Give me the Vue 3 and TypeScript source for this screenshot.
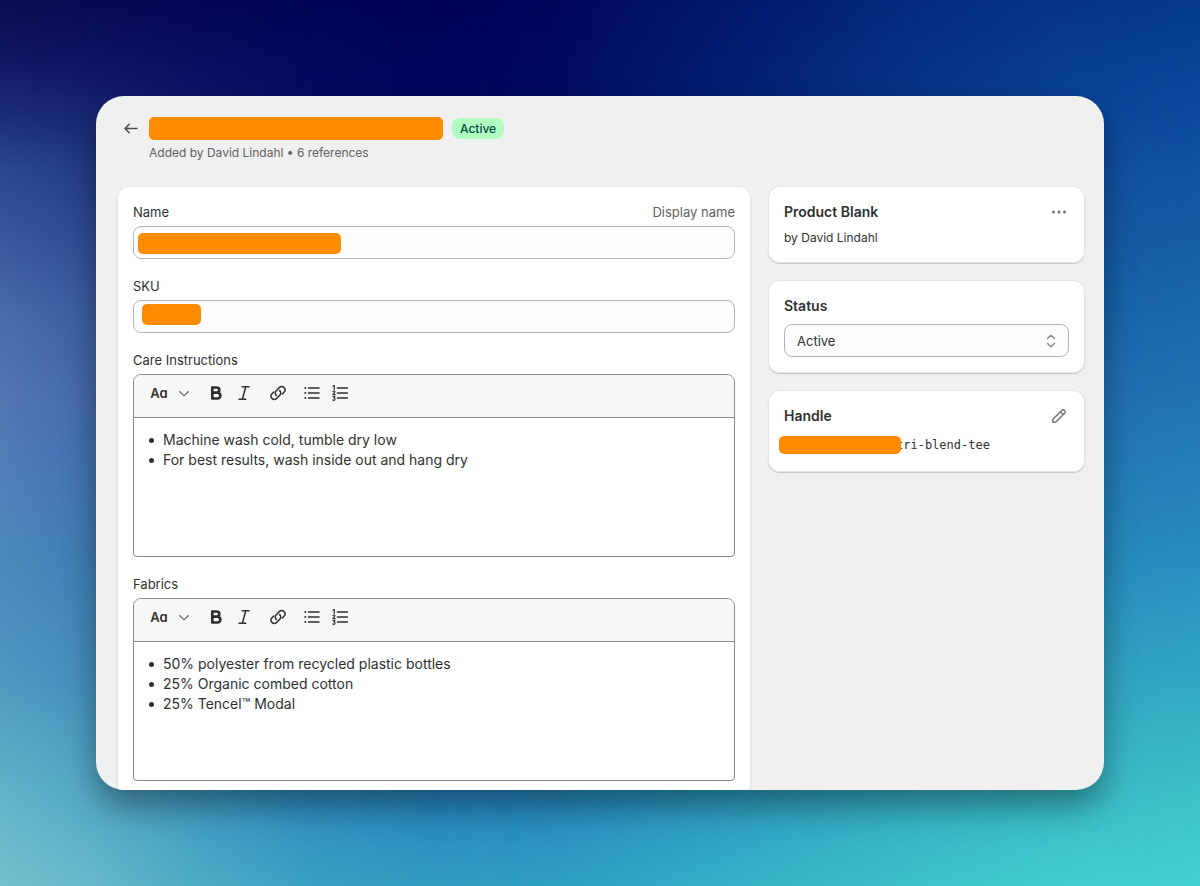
<script setup lang="ts">
import { ref } from 'vue'

interface Editor {
  id: string
  label: string
  lines: string[]
}

const name = ref('')
const sku = ref('')
const status = ref('Active')

const editors: Editor[] = [
  {
    id: 'care',
    label: 'Care Instructions',
    lines: ['Machine wash cold, tumble dry low', 'For best results, wash inside out and hang dry'],
  },
  {
    id: 'fabrics',
    label: 'Fabrics',
    lines: ['50% polyester from recycled plastic bottles', '25% Organic combed cotton', '25% Tencel™ Modal'],
  },
]
</script>

<template>
  <div class="page">
    <main class="window">
      <header class="header">
        <button class="icon-btn back" type="button" aria-label="Back">
          <svg width="16" height="16" viewBox="0 0 16 16">
            <path d="M14 7.500H2.200M6.200 3.300 2 7.500l4.200 4.200" />
          </svg>
        </button>
        <div class="heading">
          <div class="title-row">
            <span class="mask mask-title"></span>
            <span class="badge">Active</span>
          </div>
          <p class="meta">Added by David Lindahl • 6 references</p>
        </div>
      </header>

      <div class="columns">
        <section class="card main-card">
          <div class="field">
            <div class="label-row">
              <label for="name">Name</label>
              <span class="hint">Display name</span>
            </div>
            <div class="control">
              <input id="name" v-model="name" type="text" />
              <span class="mask mask-name"></span>
            </div>
          </div>

          <div class="field">
            <div class="label-row"><label for="sku">SKU</label></div>
            <div class="control">
              <input id="sku" v-model="sku" type="text" />
              <span class="mask mask-sku"></span>
            </div>
          </div>

          <div v-for="e in editors" :key="e.id" class="field">
            <div class="label-row"><span :id="e.id">{{ e.label }}</span></div>
            <div class="editor">
              <div class="toolbar">
                <button class="tool format" type="button" aria-label="Formatting">
                  <span class="aa">Aa</span>
                  <svg width="12" height="12" viewBox="0 0 12 12" class="thin">
                    <path d="M1.500 4.500 6 8.800 10.500 4.500" />
                  </svg>
                </button>
                <button class="tool bold" type="button" aria-label="Bold">
                  <svg width="16" height="16" viewBox="0 0 16 16">
                    <path d="M4.300 2.500H8.700A2.600 2.600 0 0 1 8.700 7.700H4.300ZM4.300 7.700H9.500A2.900 2.900 0 0 1 9.500 13.500H4.300Z" />
                  </svg>
                </button>
                <button class="tool italic" type="button" aria-label="Italic">
                  <svg width="16" height="16" viewBox="0 0 16 16">
                    <path d="M6.300 1.800H13M3 14.200H9.700M9.800 1.800 6.300 14.200" />
                  </svg>
                </button>
                <button class="tool link" type="button" aria-label="Link">
                  <svg width="16" height="16" viewBox="0 0 16 16">
                    <path d="M6.300 10.400A3.300 3.300 0 0 1 6.200 5.700L9.300 2.600A3.300 3.300 0 0 1 14 7.300L12.300 9" />
                    <path d="M9.700 5.600A3.300 3.300 0 0 1 9.800 10.300L6.700 13.400A3.300 3.300 0 0 1 2 8.700L3.700 7" />
                  </svg>
                </button>
                <button class="tool bullets" type="button" aria-label="Bulleted list">
                  <svg width="16" height="16" viewBox="0 0 16 16">
                    <path d="M4.500 3H15M4.500 8H15M4.500 13H15" />
                    <path class="dots" d="M1.300 3h.01M1.300 8h.01M1.300 13h.01" />
                  </svg>
                </button>
                <button class="tool numbers" type="button" aria-label="Numbered list">
                  <svg width="16" height="16" viewBox="0 0 16 16">
                    <path d="M5.500 3H15.500M5.500 8H15.500M5.500 13H15.500" />
                    <path class="digits" d="M1 1.200 2.300.5V4.500M.9 6.600C1.400 5.600 3.200 5.900 2.800 7.200L.9 9.700H3.200M1 11.500H3L1.900 12.900C3.500 13 3.300 15.400 1.800 15.400Q1.200 15.400.8 14.900" />
                  </svg>
                </button>
              </div>
              <div class="content" contenteditable="true" role="textbox" aria-multiline="true" :aria-labelledby="e.id">
                <ul>
                  <li v-for="line in e.lines" :key="line">{{ line }}</li>
                </ul>
              </div>
            </div>
          </div>
        </section>

        <aside class="side">
          <section class="card">
            <div class="card-head">
              <h2>Product Blank</h2>
              <button class="icon-btn" type="button" aria-label="More actions">
                <svg width="18" height="18" viewBox="0 0 18 18">
                  <g class="solid">
                    <circle cx="3.500" cy="9" r="1.500" />
                    <circle cx="9" cy="9" r="1.500" />
                    <circle cx="14.500" cy="9" r="1.500" />
                  </g>
                </svg>
              </button>
            </div>
            <p class="by">by David Lindahl</p>
          </section>

          <section class="card">
            <h2><label for="status">Status</label></h2>
            <div class="control select">
              <select id="status" v-model="status">
                <option>Active</option>
                <option>Draft</option>
              </select>
              <svg width="12" height="16" viewBox="0 0 12 16">
                <path d="M2.500 5.500 6 2.200 9.500 5.500M2.500 10.500 6 13.800 9.500 10.500" />
              </svg>
            </div>
          </section>

          <section class="card">
            <div class="card-head">
              <h2>Handle</h2>
              <button class="icon-btn" type="button" aria-label="Edit handle">
                <svg width="18" height="18" viewBox="0 0 18 18">
                  <path d="M2.800 15.200V13.600Q2.800 12.400 3.600 11.600L11.800 3.400A1.980 1.980 0 0 1 14.600 6.200L6.400 14.400Q5.600 15.200 4.400 15.200ZM10.400 4.800 13.200 7.600" />
                </svg>
              </button>
            </div>
            <p class="handle"><span class="mask mask-handle"></span><code>tri-blend-tee</code></p>
          </section>
        </aside>
      </div>
    </main>
  </div>
</template>

<style>
body {
  margin: 0;
}
</style>

<style scoped>
* {
  box-sizing: border-box;
}

.page {
  position: relative;
  isolation: isolate;
  height: 100vh;
  padding: 96px;
  font: 13px/20px Inter, "Liberation Sans", sans-serif;
  color: #303030;
  background: linear-gradient(#053a8e 0%, #0b4a9c 13%, #1255a4 20%, #155ca4 26%, #1a68ac 35%, #2274b4 45%, #2580b8 54%, #2890c0 64%, #2f9fc2 72%, #36b0c4 81%, #3cc0c8 89%, #42d2d0 100%);
}

.page::before,
.page::after {
  content: "";
  position: absolute;
  inset: 0;
  z-index: -1;
}

.page::before {
  background: linear-gradient(#000458 0%, #00085e 11%, #0c3a90 45%, #1c64ac 75%, #2484bc 90%, #2e9cc0 100%);
  mask-image: linear-gradient(90deg, #000 36%, rgba(0, 0, 0, 0.94) 46%, rgba(0, 0, 0, 0.6) 62%, rgba(0, 0, 0, 0.28) 77%, rgba(0, 0, 0, 0.08) 90%, transparent 100%);
}

.page::after {
  background: linear-gradient(#080c50 0%, #10165f 6%, #1c2d78 13%, #2b478d 19%, #38569a 26%, #486ba8 35%, #5377b3 45%, #5080b8 54%, #4a8aba 64%, #4f9ac0 77%, #60b2c8 89%, #74c0cc 100%);
  mask-image: linear-gradient(90deg, #000 0%, rgba(0, 0, 0, 0.78) 8%, rgba(0, 0, 0, 0.42) 17%, rgba(0, 0, 0, 0.16) 26%, rgba(0, 0, 0, 0.04) 35%, transparent 44%);
}

.window {
  height: 100%;
  padding: 21px 19px 0 21px;
  overflow: hidden;
  border-radius: 28px;
  background: #f0f0f0;
  box-shadow: 0 16px 32px rgba(0, 0, 0, 0.38);
}

button {
  display: inline-flex;
  align-items: center;
  justify-content: center;
  padding: 0;
  border: 0;
  background: none;
  color: inherit;
  font: inherit;
  cursor: pointer;
}

svg {
  display: block;
  flex: none;
  fill: none;
  stroke: currentColor;
  stroke-width: 1.5;
  stroke-linecap: round;
  stroke-linejoin: round;
}

h2,
p {
  margin: 0;
}

.mask {
  display: block;
  border-radius: 5px;
  background: #ff8c00;
}

.header {
  display: flex;
  gap: 10px;
  padding-left: 6px;
}

.back {
  width: 16px;
  height: 23px;
}

.header .back {
  color: #4a4a4a;
}

.title-row {
  display: flex;
  align-items: center;
  gap: 9px;
}

.mask-title {
  width: 294px;
  height: 23px;
}

.badge {
  padding: 0 8px;
  border-radius: 8px;
  background: #affebf;
  color: #014b40;
  font-size: 12px;
  font-weight: 500;
  line-height: 21px;
}

.meta {
  margin-top: 3px;
  color: #616161;
  font-size: 12px;
}

.columns {
  display: grid;
  grid-template-columns: 2fr 1fr;
  align-items: start;
  gap: 17px;
  margin-top: 23px;
}

.card {
  padding: 16px;
  border-radius: 12px;
  background: #fff;
  box-shadow: inset 0 0 0 1px #e3e3e3, 0 1px 1px #c4c4c4;
}

.main-card {
  display: flex;
  flex-direction: column;
  gap: 17px;
}

.label-row {
  display: flex;
  justify-content: space-between;
  margin-bottom: 4px;
}

.hint {
  color: #616161;
}

.control {
  position: relative;
}

input,
select {
  display: block;
  width: 100%;
  height: 33px;
  padding: 0 12px;
  border: 1px solid #b5b5b5;
  border-radius: 8px;
  background: #fdfdfd;
  color: #303030;
  font: inherit;
  appearance: none;
}

.control .mask {
  position: absolute;
}

.mask-name {
  top: 7px;
  left: 5px;
  width: 203px;
  height: 21px;
}

.mask-sku {
  top: 4px;
  left: 9px;
  width: 59px;
  height: 21px;
}

.editor {
  overflow: hidden;
  border: 1px solid #8a8a8a;
  border-radius: 8px 8px 4px 4px;
}

.toolbar {
  display: flex;
  align-items: center;
  padding: 4px 8px 10px 12px;
  border-bottom: 1px solid #8a8a8a;
  background: #f7f7f7;
}

.tool {
  width: 28px;
  height: 28px;
}

.format {
  gap: 10px;
  width: 48px;
}

.aa {
  font: 600 13px/28px Inter, sans-serif;
  font-feature-settings: "cv11";
}

.thin {
  color: #707070;
  stroke-width: 1.2;
}

.bold {
  margin-left: 8px;
}

.bold svg {
  stroke-width: 2.7;
}

.link {
  margin-left: 6px;
}

.bullets {
  margin-left: 6px;
}

.dots {
  stroke-width: 2;
}

.digits {
  stroke-width: 1.2;
}

.content {
  min-height: 138px;
  padding: 12px 15px;
  font-size: 14px;
  outline: none;
}

ul {
  margin: 0;
  padding-left: 14px;
  list-style: none;
}

li::before {
  content: "";
  float: left;
  width: 5px;
  height: 5px;
  margin: 8px 0 0 -14px;
  border-radius: 50%;
  background: #303030;
}

.side {
  display: flex;
  flex-direction: column;
  gap: 17px;
}

.card-head {
  display: flex;
  align-items: center;
  justify-content: space-between;
}

h2 {
  font-size: 14px;
  line-height: 20px;
  font-weight: 600;
}

.icon-btn {
  color: #707070;
}

.card .icon-btn {
  height: 20px;
  margin-right: 1px;
}

.card .icon-btn svg {
  stroke-width: 1.4;
}

.card .icon-btn .solid {
  fill: currentColor;
  stroke: none;
}

.by {
  margin-top: 7px;
  font-size: 12px;
  line-height: 18px;
}

.select {
  margin-top: 8px;
}

.select svg {
  position: absolute;
  top: 9px;
  right: 12px;
  color: #8a8a8a;
  pointer-events: none;
}

.handle {
  display: flex;
  align-items: center;
  margin-top: 8px;
}

.mask-handle {
  position: relative;
  width: 122px;
  height: 18px;
  margin: 0 -5px;
}

.handle code {
  font: 12px/22px "DejaVu Sans Mono", monospace;
}
</style>
